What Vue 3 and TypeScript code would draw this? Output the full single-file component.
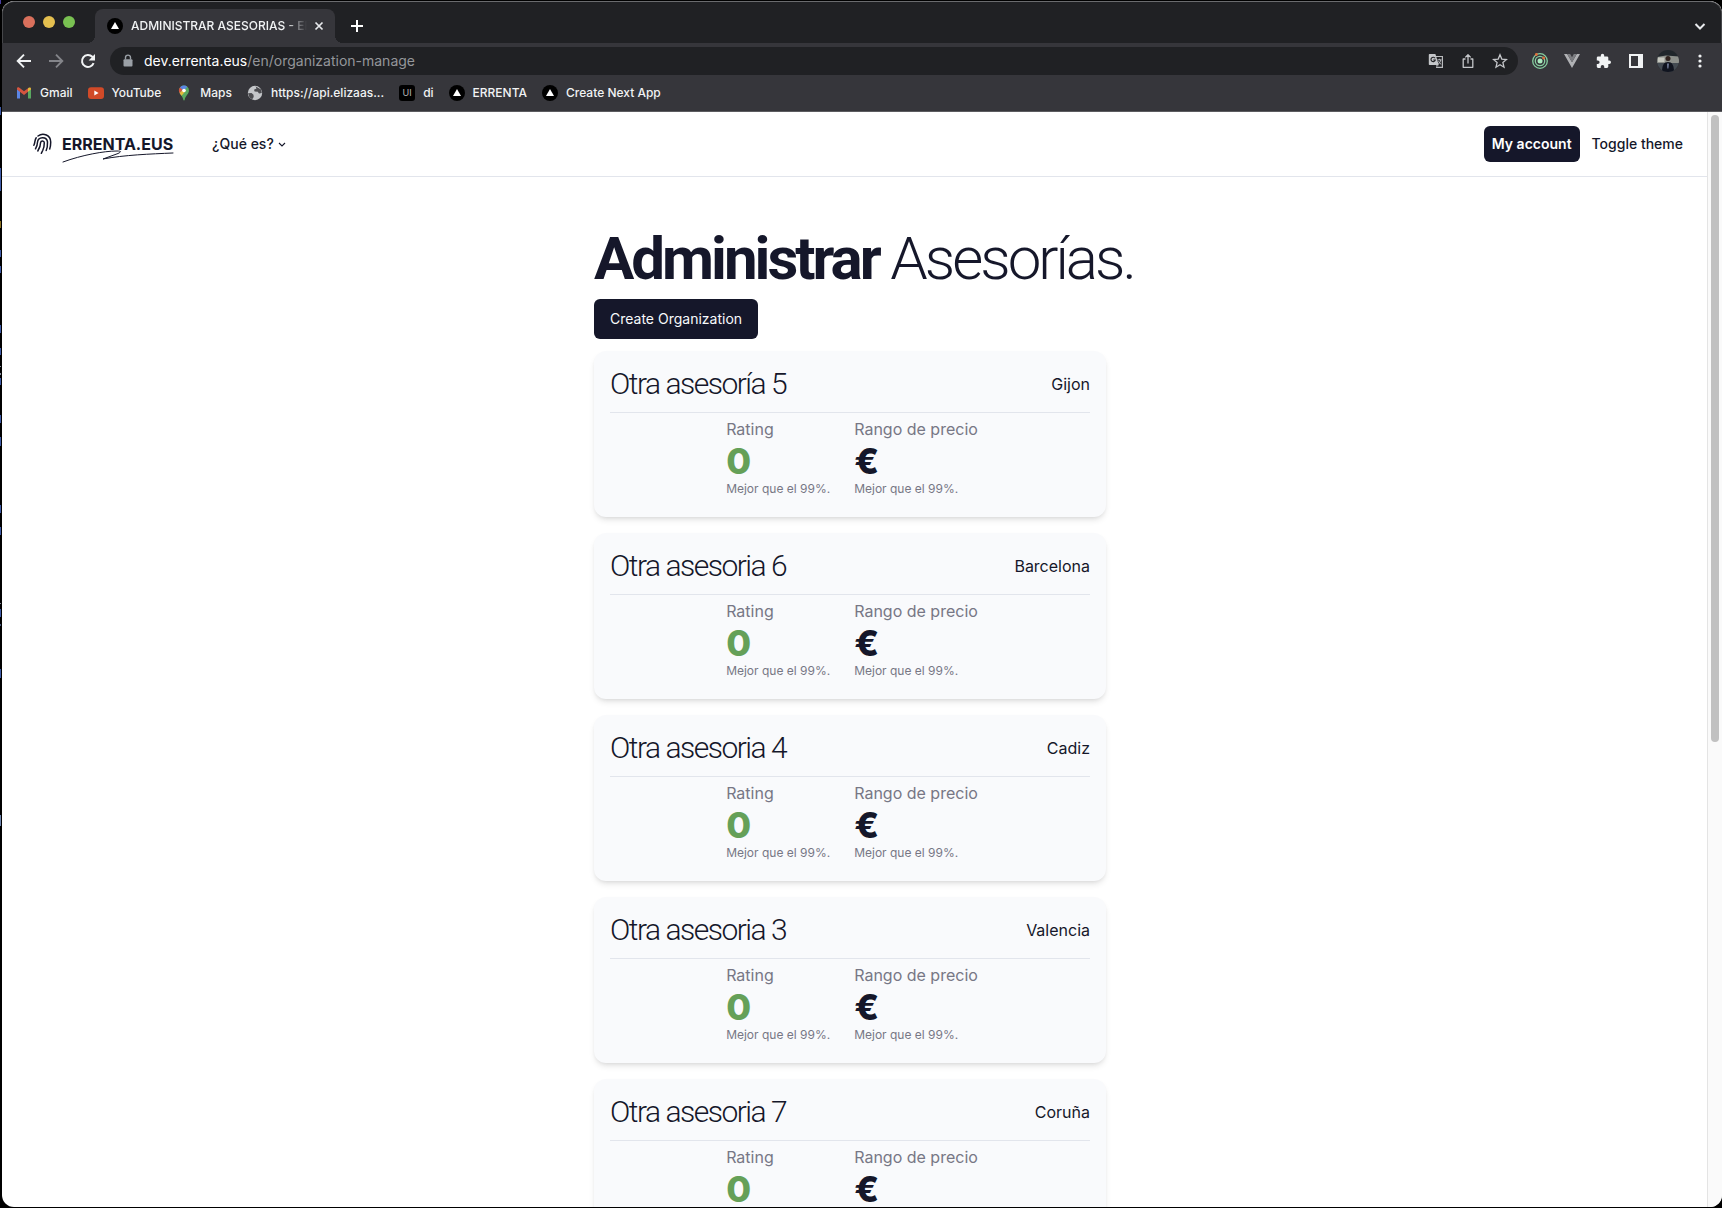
<script setup lang="ts">
interface Organization {
  name: string
  city: string
  rating: number
  price: string
}

interface EdgeMark {
  y: number
  h: number
  color: string
}

const organizations: Organization[] = [
  { name: 'Otra asesoría 5', city: 'Gijon', rating: 0, price: '€' },
  { name: 'Otra asesoria 6', city: 'Barcelona', rating: 0, price: '€' },
  { name: 'Otra asesoria 4', city: 'Cadiz', rating: 0, price: '€' },
  { name: 'Otra asesoria 3', city: 'Valencia', rating: 0, price: '€' },
  { name: 'Otra asesoria 7', city: 'Coruña', rating: 0, price: '€' },
]

// Slivers of the window that sits behind the browser
const edgeMarks: EdgeMark[] = [
  { y: 0, h: 4, color: '#4a3fa0' },
  { y: 107, h: 8, color: '#3f5ba8' },
  { y: 168, h: 23, color: '#3f5ba8' },
  { y: 221, h: 7, color: '#8a7020' },
  { y: 250, h: 7, color: '#3f5ba8' },
  { y: 266, h: 7, color: '#3f5ba8' },
  { y: 325, h: 8, color: '#3f5ba8' },
  { y: 348, h: 7, color: '#3f5ba8' },
  { y: 366, h: 1, color: '#8890a0' },
  { y: 373, h: 2, color: '#8890a0' },
  { y: 378, h: 7, color: '#3f5ba8' },
  { y: 415, h: 8, color: '#3f5ba8' },
  { y: 437, h: 9, color: '#3f5ba8' },
  { y: 505, h: 8, color: '#3f5ba8' },
  { y: 527, h: 8, color: '#3f5ba8' },
  { y: 603, h: 1, color: '#8890a0' },
  { y: 609, h: 8, color: '#3f5ba8' },
  { y: 624, h: 2, color: '#4a5a80' },
  { y: 669, h: 9, color: '#3f5ba8' },
  { y: 815, h: 11, color: '#6f86b0' },
]
</script>

<template>
  <div class="desktop">
    <svg class="edge" width="1" height="100%" aria-hidden="true">
      <rect v-for="m in edgeMarks" :key="m.y" x="0" :y="m.y" width="1" :height="m.h" :fill="m.color" />
    </svg>
    <div class="window">
      <div class="tabstrip">
        <div class="lights">
          <span class="light red"></span>
          <span class="light yellow"></span>
          <span class="light green"></span>
        </div>
        <div class="tab">
          <svg class="fav" viewBox="0 0 16 16"><circle cx="8" cy="8" r="8" fill="#000" /><path d="M8 4l4 7H4z" fill="#fff" /></svg>
          <span class="tab-title">ADMINISTRAR ASESORIAS - ERRENTA</span>
          <button class="icon-btn" aria-label="Close tab">
            <svg width="16" height="16" viewBox="0 0 16 16"><path d="M4.500 4.500l7 7M11.500 4.500l-7 7" stroke="#e8eaed" stroke-width="1.700" /></svg>
          </button>
        </div>
        <button class="icon-btn new-tab" aria-label="New tab">
          <svg width="16" height="16" viewBox="0 0 16 16"><path d="M8 2v12M2 8h12" stroke="#fff" stroke-width="2" /></svg>
        </button>
        <button class="icon-btn tab-search" aria-label="Search tabs">
          <svg width="16" height="16" viewBox="0 0 16 16"><path d="M3.500 6l4.500 4.500L12.500 6" fill="none" stroke="#e8eaed" stroke-width="2" /></svg>
        </button>
      </div>

      <div class="toolbar">
        <button class="icon-btn" aria-label="Back">
          <svg width="16" height="16" viewBox="0 0 16 16"><path d="M15 8H2M8 1.700L1.700 8 8 14.300" fill="none" stroke="#f1f3f4" stroke-width="1.900" /></svg>
        </button>
        <button class="icon-btn" aria-label="Forward">
          <svg width="16" height="16" viewBox="0 0 16 16"><path d="M1 8h13M8 1.700L14.300 8 8 14.300" fill="none" stroke="#84858a" stroke-width="1.900" /></svg>
        </button>
        <button class="icon-btn" aria-label="Reload">
          <svg width="16" height="16" viewBox="0 0 16 16"><path d="M13.600 10.200A6 6 0 1 1 12.300 3.800L14 5.600" fill="none" stroke="#f1f3f4" stroke-width="2" /><path d="M15 1v6.500H8.600z" fill="#f1f3f4" /></svg>
        </button>
        <div class="omnibox">
          <svg width="16" height="16" viewBox="0 0 16 16"><rect x="3.500" y="6.200" width="9" height="7.400" rx="1" fill="#9aa0a6" /><path d="M5.500 6.500V4.600a2.500 2.500 0 0 1 5 0v1.900" fill="none" stroke="#9aa0a6" stroke-width="1.400" /></svg>
          <span class="url"><b>dev.errenta.eus</b>/en/organization-manage</span>
          <button class="icon-btn" aria-label="Translate">
            <svg width="16" height="16" viewBox="0 0 16 16">
              <path d="M7 3.500h7.400v10.800H8" fill="none" stroke="#b9bbbe" stroke-width="1.200" />
              <path d="M1.600 1h5.800l3.400 11H1.600a.8.800 0 0 1-.8-.8V1.800a.8.800 0 0 1 .8-.8z" fill="#c4c6c9" />
              <path d="M7.100 5.300A2.200 2.200 0 1 0 7.300 7H5.200" fill="none" stroke="#202124" stroke-width="1.100" />
              <path d="M9.500 6.800h4M11.500 5.800v1M12.800 7c-.4 1.800-1.300 3-2.400 4M10.500 8.300c.6 1.400 1.500 2.300 2.700 3" fill="none" stroke="#b9bbbe" />
              <path d="M8 12h2.800L8.500 14.500z" fill="#8b8d90" />
            </svg>
          </button>
          <button class="icon-btn" aria-label="Share">
            <svg width="16" height="16" viewBox="0 0 16 16"><path d="M5.500 6H3.200v8.300h9.600V6h-2.300M8 10.500V2M5.300 4.400L8 1.700l2.700 2.700" fill="none" stroke="#c4c6c9" stroke-width="1.300" stroke-linejoin="round" /></svg>
          </button>
          <button class="icon-btn" aria-label="Bookmark this page">
            <svg width="16" height="16" viewBox="0 0 16 16"><path d="M8 1.800l1.800 4.300 4.700.4-3.600 3.100 1.100 4.600L8 11.700l-4 2.500 1.100-4.600-3.600-3.100 4.700-.4z" fill="none" stroke="#c4c6c9" stroke-width="1.300" /></svg>
          </button>
        </div>
        <button class="icon-btn" aria-label="Radar extension">
          <svg width="16" height="16" viewBox="0 0 16 16"><g fill="none" stroke="#86cfa0" stroke-width="1.300"><circle cx="8" cy="8" r="7.300" /><circle cx="8" cy="8" r="4.700" /></g><circle cx="8" cy="8" r="2.500" fill="#a9e9bd" /><circle cx="4.400" cy="1.500" r="1.400" fill="#e0703a" /><circle cx="11.600" cy="5" r="1.400" fill="#e0703a" /></svg>
        </button>
        <button class="icon-btn" aria-label="Vue devtools">
          <svg width="16" height="16" viewBox="0 0 16 16"><path d="M0 1h3.200L8 9.300 12.800 1H16L8 15z" fill="#b0b1b4" /><path d="M3.200 1h3L8 4.200 9.800 1h3L8 9.300z" fill="#7b7c80" /></svg>
        </button>
        <button class="icon-btn" aria-label="Extensions">
          <svg width="16" height="16" viewBox="0 0 16 16"><path d="M13.300 7.600h-1V4.800a1.300 1.300 0 0 0-1.300-1.300H8.200v-1a1.700 1.700 0 0 0-3.400 0v1H2.100A1.300 1.300 0 0 0 .8 4.800v2.600h1a1.800 1.800 0 0 1 0 3.600h-1v2.600c0 .7.600 1.300 1.300 1.300h2.600v-1a1.800 1.800 0 0 1 3.600 0v1h2.600c.8 0 1.400-.6 1.400-1.300V11h1a1.700 1.700 0 0 0 0-3.400z" fill="#f1f3f4" /></svg>
        </button>
        <button class="icon-btn" aria-label="Side panel">
          <svg width="16" height="16" viewBox="0 0 16 16"><rect x="2" y="2" width="12" height="12" fill="none" stroke="#f1f3f4" stroke-width="2" /><path d="M10 2h5v12h-5z" fill="#f1f3f4" /></svg>
        </button>
        <button class="icon-btn" aria-label="Profile">
          <svg class="avatar" width="22" height="22" viewBox="0 0 22 22">
            <defs><clipPath id="face"><circle cx="11" cy="11" r="11" /></clipPath></defs>
            <g clip-path="url(#face)">
              <rect width="22" height="22" fill="#20262b" />
              <path d="M0 7l9-1.500 13 1V13H0z" fill="#8d908b" />
              <path d="M1 7.500h6.500V12H1z" fill="#c6c8c0" />
              <path d="M0 13h22v9H0z" fill="#444b52" />
              <path d="M5 22c0-7 2-10 6-10s6 3 6 10z" fill="#10141f" />
              <circle cx="11" cy="8.500" r="2.500" fill="#30231f" />
              <path d="M10.300 13.500h1.400l-.4 5h-.8z" fill="#9aa6c8" />
            </g>
          </svg>
        </button>
        <button class="icon-btn" aria-label="Menu">
          <svg width="16" height="16" viewBox="0 0 16 16" fill="#f1f3f4"><circle cx="8" cy="3" r="1.600" /><circle cx="8" cy="8" r="1.600" /><circle cx="8" cy="13" r="1.600" /></svg>
        </button>
      </div>

      <nav class="bookmarks" aria-label="Bookmarks">
        <a href="#" class="bm">
          <svg class="fav" viewBox="0 0 16 16"><path d="M1 13.500V4l3 2.200v7.300z" fill="#5b86e5" /><path d="M15 13.500V4l-3 2.200v7.300z" fill="#5aa860" /><path d="M1 4.300V3.600C1 2.300 2.500 2 3.400 2.700L8 6.200l4-3v3.600L8 9.900 1 4.600z" fill="#d5553f" /><path d="M12 3.200l.7-.5C13.700 2 15 2.500 15 3.700v.8l-3 2.300z" fill="#e4b83c" /></svg>Gmail
        </a>
        <a href="#" class="bm">
          <svg class="fav" viewBox="0 0 16 16"><rect y="2.300" width="16" height="11.600" rx="3" fill="#d14a28" /><path d="M6.300 5.600v5l4.300-2.500z" fill="#fff" /></svg>YouTube
        </a>
        <a href="#" class="bm">
          <svg class="fav" viewBox="0 0 16 16"><path d="M8 .5a5 5 0 0 1 5 5c0 3.600-3.600 5-4.300 9.200-.1.900-1.300.9-1.400 0C6.600 10.500 3 9.100 3 5.500a5 5 0 0 1 5-5z" fill="#5aa860" /><path d="M4 2.500A5 5 0 0 1 11.300 1.700L6.300 7.500z" fill="#5b86e5" /><path d="M4 2.400A5 5 0 0 0 3.600 8L6.600 4.700z" fill="#d5553f" /><path d="M3.600 8c.5 1 1.300 1.800 2 2.700L10 5.600 8 3.800z" fill="#e4b83c" /><circle cx="8" cy="5.500" r="1.800" fill="#fff" /></svg>Maps
        </a>
        <a href="#" class="bm">
          <svg class="fav" viewBox="0 0 16 16"><circle cx="8" cy="8" r="7.200" fill="#c4c6c9" /><path d="M1 8.200l3.500-.2 2 1.800.2 2.200-1.500 2.200-2.700-1.700zM8.500 1.200l1 2.300-2.500 1.200.6 1.800 3.200.2 1.200 1.800 2.800-.6-.8-3.500z" fill="#4c4c50" /></svg>https://api.elizaas...
        </a>
        <a href="#" class="bm"><span class="fav ui">UI</span>di</a>
        <a href="#" class="bm">
          <svg class="fav" viewBox="0 0 16 16"><circle cx="8" cy="8" r="8" fill="#000" /><path d="M8 4l4 7H4z" fill="#fff" /></svg>ERRENTA
        </a>
        <a href="#" class="bm">
          <svg class="fav" viewBox="0 0 16 16"><circle cx="8" cy="8" r="8" fill="#000" /><path d="M8 4l4 7H4z" fill="#fff" /></svg>Create Next App
        </a>
      </nav>

      <div class="viewport">
        <div class="page">
          <header class="site-header">
            <a href="#" class="brand">
              <svg class="print" width="20" height="22" viewBox="0 0 20 22" fill="none" stroke="#15172a" stroke-width="1.500" stroke-linecap="round">
                <path d="M5 3C10-.8 18 2 17.700 9.500c0 2.500-.3 4.500-1 6.500" />
                <path d="M3.200 4.800C1.600 7 2.200 9.500.9 12.300" />
                <path d="M2.500 15.800c1.600-2.600 1.900-4 2-6.600C4.900 3.500 13.800 3 14.500 8.900c.1 3.400-.2 6.200-1.300 8.600" />
                <path d="M4.800 18c2-3 2.800-5.300 2.800-8.400.3-2.300 3.600-2.300 3.700.1 0 3.200-.5 5.300-1.500 7.600l-1.500 3" />
              </svg>
              <span class="wordmark">
                ERRENTA.EUS
                <svg class="swoosh" width="112" height="14" viewBox="0 0 112 14" fill="none" stroke="#15172a" stroke-linecap="round" stroke-linejoin="round"><path d="M1 12C20 5 42 1 55 1c5 0 4 1 1 2.500L41 9C62 5 88 4 111 3" /></svg>
              </span>
            </a>
            <button class="menu">
              ¿Qué es?
              <svg width="12" height="12" viewBox="0 0 12 12"><path d="M3 5l3 3 3-3" fill="none" stroke="#15172a" stroke-width="1.100" /></svg>
            </button>
            <div class="actions">
              <button class="account">My account</button>
              <button class="theme">Toggle theme</button>
            </div>
          </header>

          <main class="content">
            <h1><strong>Administrar</strong> Asesorías.</h1>
            <button class="create">Create Organization</button>
            <section class="list">
              <article v-for="org in organizations" :key="org.name" class="card">
                <div class="card-head">
                  <h2>{{ org.name }}</h2>
                  <span class="city">{{ org.city }}</span>
                </div>
                <div class="stats">
                  <div class="stat">
                    <span class="label">Rating</span>
                    <span class="value good">{{ org.rating }}</span>
                    <span class="note">Mejor que el 99%.</span>
                  </div>
                  <div class="stat">
                    <span class="label">Rango de precio</span>
                    <span class="value">{{ org.price }}</span>
                    <span class="note">Mejor que el 99%.</span>
                  </div>
                </div>
              </article>
            </section>
          </main>
        </div>
        <div class="scrollbar"><div class="thumb"></div></div>
      </div>
    </div>
  </div>
</template>

<style>
body {
  background: #000;
}
</style>

<style scoped>
.desktop {
  position: relative;
  box-sizing: border-box;
  height: 100vh;
  padding: 1px 0 1px 2px;
  background: #000;
  font-family: Inter, "Liberation Sans", sans-serif;
  color: #15172a;
  overflow: hidden;
}
.edge {
  position: absolute;
  left: 0;
  top: 0;
}
.window {
  box-sizing: border-box;
  height: 100%;
  display: flex;
  flex-direction: column;
  border-radius: 12px;
  overflow: hidden;
  background: #fff;
}
button {
  font: inherit;
  border: 0;
  padding: 0;
  background: none;
  color: inherit;
}
.icon-btn {
  display: flex;
  align-items: center;
  justify-content: center;
  width: 16px;
  height: 16px;
  flex: none;
}
.icon-btn svg {
  flex: none;
}
.tabstrip {
  box-sizing: border-box;
  height: 42px;
  flex: none;
  display: flex;
  background: #202124;
  border-top: 1px solid #6a6b6e;
  border-left: 1px solid #46474a;
  border-right: 1px solid #46474a;
  border-radius: 12px 12px 0 0;
}
.lights {
  display: flex;
  gap: 8px;
  padding: 14px 20px 0;
  width: 52px;
}
.light {
  width: 12px;
  height: 12px;
  border-radius: 50%;
}
.red {
  background: #d9705c;
}
.yellow {
  background: #e4bf4f;
}
.green {
  background: #79c152;
}
.tab {
  position: relative;
  box-sizing: border-box;
  width: 240px;
  margin-top: 7px;
  padding: 0 8px 0 12px;
  display: flex;
  align-items: center;
  gap: 8px;
  background: #36363b;
  border-radius: 8px 8px 0 0;
}
.tab::before,
.tab::after {
  content: "";
  position: absolute;
  bottom: 0;
  width: 8px;
  height: 8px;
}
.tab::before {
  right: 100%;
  background: radial-gradient(circle at 0 0, transparent 8px, #36363b 8px);
}
.tab::after {
  left: 100%;
  background: radial-gradient(circle at 100% 0, transparent 8px, #36363b 8px);
}
.fav {
  width: 16px;
  height: 16px;
  flex: none;
}
.tab-title {
  flex: 1;
  min-width: 0;
  margin-right: -4px;
  overflow: hidden;
  white-space: nowrap;
  font-size: 12px;
  line-height: 16px;
  font-weight: 500;
  color: #f1f3f4;
  mask-image: linear-gradient(to right, #000 88%, transparent 100%);
}
.new-tab {
  margin: 16px 0 0 14px;
}
.tab-search {
  margin: 16px 13px 0 auto;
}
.toolbar {
  height: 36px;
  flex: none;
  display: flex;
  align-items: center;
  gap: 16px;
  padding: 0 14px;
  background: #36363b;
}
.omnibox {
  flex: 1;
  height: 28px;
  margin-left: -2px;
  margin-right: -2px;
  padding: 0 10px;
  display: flex;
  align-items: center;
  gap: 16px;
  border-radius: 14px;
  background: #202124;
}
.url {
  flex: 1;
  margin-left: -8px;
  font-size: 14px;
  line-height: 20px;
  color: #94969a;
  white-space: nowrap;
}
.url b {
  font-weight: 400;
  color: #fff;
}
.avatar {
  margin: 0 -3px;
}
.bookmarks {
  box-sizing: border-box;
  height: 33px;
  flex: none;
  display: flex;
  align-items: center;
  gap: 15px;
  padding: 0 14px 4px;
  background: #36363b;
  border-bottom: 1px solid #5c5c60;
}
.bm {
  display: flex;
  align-items: center;
  gap: 8px;
  font-size: 12px;
  line-height: 16px;
  font-weight: 500;
  color: #f1f3f4;
  text-decoration: none;
  white-space: nowrap;
}
.ui {
  border-radius: 3px;
  background: #000;
  color: #b8b8b8;
  font-size: 9px;
  font-weight: 400;
  text-align: center;
}
.viewport {
  flex: 1;
  min-height: 0;
  display: flex;
}
.page {
  flex: 1;
  min-width: 0;
  overflow: hidden;
}
.scrollbar {
  box-sizing: border-box;
  width: 15px;
  flex: none;
  padding: 3px 3px 0;
  background: #fafafa;
  border-left: 1px solid #e4e4e4;
}
.thumb {
  width: 8px;
  height: 57.4%;
  border-radius: 4px;
  background: #c1c1c1;
}
.site-header {
  display: flex;
  align-items: center;
  height: 64px;
  padding: 0 24px 0 31px;
  border-bottom: 1px solid #e2e5ec;
}
.brand {
  display: flex;
  align-items: center;
  gap: 9px;
  color: inherit;
  text-decoration: none;
}
.wordmark {
  position: relative;
  font-size: 16px;
  line-height: 24px;
  font-weight: 700;
}
.swoosh {
  position: absolute;
  left: 0;
  top: 18px;
}
.menu {
  display: flex;
  align-items: center;
  gap: 2px;
  margin-left: 39px;
  font-size: 14px;
  line-height: 20px;
  font-weight: 500;
}
.actions {
  display: flex;
  align-items: center;
  gap: 12px;
  margin-left: auto;
}
.account {
  height: 36px;
  padding: 0 8px;
  border-radius: 6px;
  background: #15172a;
  color: #fff;
  font-size: 14px;
  line-height: 20px;
  font-weight: 600;
}
.theme {
  font-size: 14px;
  line-height: 20px;
  font-weight: 500;
}
.content {
  width: 521px;
  margin: 0 auto;
  padding-top: 52px;
}
h1,
h2 {
  font-family: Roboto, Inter, sans-serif;
  font-weight: 300;
  letter-spacing: -0.05em;
}
h1 {
  margin: 0 0 10px;
  font-size: 60px;
  line-height: 60px;
  white-space: nowrap;
}
h1 strong {
  font-weight: 700;
}
.create {
  display: block;
  height: 40px;
  padding: 0 16px;
  border-radius: 6px;
  background: #15172a;
  color: #f8fafc;
  font-size: 14px;
  line-height: 20px;
  font-weight: 400;
}
.list {
  display: flex;
  flex-direction: column;
  gap: 16px;
  margin-top: 12px;
  max-width: 512px;
}
.card {
  padding: 16px;
  border-radius: 12px;
  background: #f9fafc;
  box-shadow: 0 4px 6px -1px rgba(0, 0, 0, 0.1), 0 2px 4px -2px rgba(0, 0, 0, 0.1);
}
.card-head {
  display: flex;
  align-items: center;
  justify-content: space-between;
  padding-bottom: 11px;
  border-bottom: 1px solid #e2e5ec;
}
h2 {
  margin: 0;
  font-size: 30px;
  line-height: 34px;
}
.city {
  font-size: 16px;
  line-height: 24px;
}
.stats {
  display: flex;
  justify-content: center;
  gap: 24px;
  padding: 4px 0 4px 4px;
}
.stat {
  display: flex;
  flex-direction: column;
}
.label {
  font-size: 16px;
  line-height: 24px;
  color: #777785;
}
.value {
  font-size: 36px;
  line-height: 40px;
  font-weight: 800;
}
.good {
  color: #65a058;
}
.note {
  font-size: 12px;
  line-height: 16px;
  color: #777785;
}
</style>
